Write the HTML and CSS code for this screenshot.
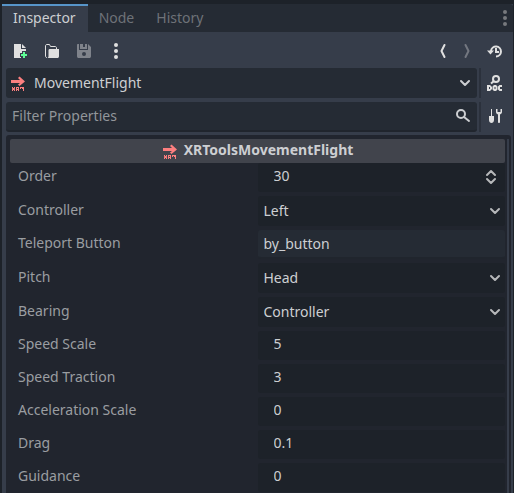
FILE: index.html
```html
<!DOCTYPE html>
<html lang="en">
<head>
<meta charset="utf-8">
<title>Inspector</title>
<link rel="stylesheet" href="styles.css">
</head>
<body>
<svg class="defs" aria-hidden="true">
  <symbol id="xr" viewBox="0 0 16 16">
    <path d="M1 5h9L8 3l1.500-1.500L15 6.500l-5.500 4.500L8 9.500 10 8H1z" fill="#fc7f7f"/>
    <path d="M2 12h1v1h1v-1h1v1.500L4.500 14l.5.500V16H4v-1H3v1H2v-1.500l.5-.5-.5-.500zM6 12h3v4H8v-1H7v1H6zM7 13v1h1v-1zM10 12h4v4h-1v-2h-1v-1h-1v1h-1z" fill="#fc7f7f" fill-rule="evenodd"/>
  </symbol>
  <symbol id="chevron" viewBox="0 0 12 12">
    <path d="M2 4l4 4 4-4" fill="none" stroke="currentColor" stroke-width="2" stroke-linecap="round" stroke-linejoin="round"/>
  </symbol>
</svg>
<main class="dock">
  <nav class="tabs">
    <button class="tab active">Inspector</button>
    <button class="tab">Node</button>
    <button class="tab">History</button>
    <button class="icon-button dock-menu" aria-label="Dock menu">
      <svg width="16" height="16" viewBox="0 0 16 16" fill="#77797d"><circle cx="8" cy="2" r="2"/><circle cx="8" cy="8" r="2"/><circle cx="8" cy="14" r="2"/></svg>
    </button>
  </nav>
  <div class="toolbar">
    <button class="icon-button" aria-label="New resource">
      <svg width="16" height="16" viewBox="0 0 16 16"><path d="M2 1h7v5h5v2h-4v2H8v4h1v1H2zM10 1l4 4h-4z" fill="#e0e0e0"/><path d="M11 9h2v2h2v2h-2v2h-2v-2H9v-2h2z" fill="#5fff97"/></svg>
    </button>
    <button class="icon-button" aria-label="Open resource">
      <svg width="16" height="16" viewBox="0 0 16 16"><path d="M3 14.500c-1 0-1.500-.5-1.500-1.500V3c0-1 .5-1.500 1.500-1.500h2.500l1 2H11c1 0 1.500.5 1.500 1.500v1" fill="none" stroke="#e0e0e0"/><path d="M6 6h9v7c0 1.500-.5 2-2 2H3c1 0 1.500-.5 1.500-2V7.500C4.500 6.500 5 6 6 6z" fill="#e0e0e0"/></svg>
    </button>
    <button class="icon-button" aria-label="Save resource" disabled>
      <svg width="16" height="16" viewBox="0 0 16 16"><path fill-rule="evenodd" d="M2 1h1v5c0 1 0 1 1 1h7c1 0 1 0 1-1V1l3 3v9c0 1.500-.5 2-2 2H3c-1.500 0-2-.5-2-2V2c0-.6.400-1 1-1zM8 9a2 2 0 1 0 0 4 2 2 0 0 0 0-4z" fill="#7f838b"/><path d="M4 1h3v3h2V1h2v5H4z" fill="#7f838b"/></svg>
    </button>
    <button class="icon-button" aria-label="Resource menu">
      <svg width="16" height="16" viewBox="0 0 16 16" fill="#e0e0e0"><circle cx="8" cy="2" r="2"/><circle cx="8" cy="8" r="2"/><circle cx="8" cy="14" r="2"/></svg>
    </button>
    <span class="spacer"></span>
    <button class="icon-button back" aria-label="Previous object">
      <svg width="8" height="16" viewBox="0 0 8 16"><path d="M5.500 2l-3 6 3 6" fill="none" stroke="#e0e0e0" stroke-width="2" stroke-linecap="round" stroke-linejoin="round"/></svg>
    </button>
    <button class="icon-button forward" aria-label="Next object" disabled>
      <svg width="8" height="16" viewBox="0 0 8 16"><path d="M2.500 2l3 6-3 6" fill="none" stroke="#737780" stroke-width="2" stroke-linecap="round" stroke-linejoin="round"/></svg>
    </button>
    <button class="icon-button" aria-label="Object history">
      <svg width="16" height="16" viewBox="0 0 16 16"><path d="M4 8a5 5 0 1 1 5 5.500" fill="none" stroke="#e0e0e0" stroke-width="2"/><path d="M0 7.500h7L3.500 11.500z" fill="#e0e0e0"/><path d="M9 5v4h3" fill="none" stroke="#e0e0e0" stroke-width="2"/></svg>
    </button>
  </div>
  <div class="bar">
    <div class="box object">
      <svg class="lead" width="16" height="16"><use href="#xr"/></svg>
      <select aria-label="Edited object"><option>MovementFlight</option></select>
      <svg class="arrow" width="12" height="12"><use href="#chevron"/></svg>
    </div>
    <button class="icon-button side" aria-label="Open documentation">
      <svg width="16" height="16" viewBox="0 0 16 16"><path d="M7 6L4 8.500" stroke="#e0e0e0" stroke-width="2"/><circle cx="9" cy="4" r="3" fill="none" stroke="#e0e0e0" stroke-width="2"/><path fill-rule="evenodd" fill="#e0e0e0" d="M0 10h3l2 2v2l-2 2H0zM2 12v2h1v-2zM7 10h2l1.500 1.500v3L9 16H7l-1.500-1.500v-3zM7.500 12v2h1v-2zM12.500 10H15v2h-2v2h2v2h-2.500L11 14.500v-3z"/></svg>
    </button>
  </div>
  <div class="bar">
    <div class="box filter">
      <input type="text" placeholder="Filter Properties" aria-label="Filter Properties">
      <svg class="arrow" width="16" height="16" viewBox="0 0 16 16" fill="none" stroke="#cdcfd2" stroke-width="2"><circle cx="6" cy="6" r="4"/><path d="M9 9l5 4" stroke-linecap="round"/></svg>
    </div>
    <button class="icon-button side" aria-label="Manage properties">
      <svg width="16" height="16" viewBox="0 0 16 16"><path d="M4 1h1v7h2v4c0 4-5 4-5 0V8h2z" fill="#e0e0e0"/><path d="M9 1v3c0 1.300.700 2 2 2.500V14c0 1.300 2 1.300 2 0V6.500c1.300-.5 2-1.200 2-2.500V1h-1.500v3h-3V1z" fill="#e0e0e0"/></svg>
    </button>
  </div>
  <section class="properties">
    <h1 class="category"><svg width="16" height="16"><use href="#xr"/></svg><span>XRToolsMovementFlight</span></h1>
    <div class="row">
      <label for="order">Order</label>
      <div class="field number"><input id="order" type="text" value="30">
        <svg class="arrow" width="16" height="16" viewBox="0 0 16 16" fill="none" stroke="#b6b8ba" stroke-width="2" stroke-linecap="round" stroke-linejoin="round"><path d="M4 6l4-4 4 4M4 10l4 4 4-4"/></svg>
      </div>
    </div>
    <div class="row choice">
      <label for="controller">Controller</label>
      <div class="field"><select id="controller"><option>Left</option><option>Right</option></select><svg class="arrow" width="12" height="12"><use href="#chevron"/></svg></div>
    </div>
    <div class="row">
      <label for="teleport">Teleport Button</label>
      <div class="field string"><input id="teleport" type="text" value="by_button"></div>
    </div>
    <div class="row choice">
      <label for="pitch">Pitch</label>
      <div class="field"><select id="pitch"><option>Head</option><option>Controller</option></select><svg class="arrow" width="12" height="12"><use href="#chevron"/></svg></div>
    </div>
    <div class="row choice">
      <label for="bearing">Bearing</label>
      <div class="field"><select id="bearing"><option>Controller</option><option>Head</option></select><svg class="arrow" width="12" height="12"><use href="#chevron"/></svg></div>
    </div>
    <div class="row">
      <label for="scale">Speed Scale</label>
      <div class="field number"><input id="scale" type="text" value="5"></div>
    </div>
    <div class="row">
      <label for="traction">Speed Traction</label>
      <div class="field number"><input id="traction" type="text" value="3"></div>
    </div>
    <div class="row">
      <label for="acceleration">Acceleration Scale</label>
      <div class="field number"><input id="acceleration" type="text" value="0"></div>
    </div>
    <div class="row">
      <label for="drag">Drag</label>
      <div class="field number"><input id="drag" type="text" value="0.1"></div>
    </div>
    <div class="row">
      <label for="guidance">Guidance</label>
      <div class="field number"><input id="guidance" type="text" value="0"></div>
    </div>
  </section>
</main>
</body>
</html>
```
FILE: styles.css
```css
* {
  box-sizing: border-box;
}

body {
  margin: 0;
  padding: 4px 1px 0 2px;
  background: #1d2229;
  color: #cdcfd2;
  font: 14px/20px "Noto Sans", sans-serif;
}

button,
input,
select {
  margin: 0;
  padding: 0;
  border: 0;
  outline: 0;
  background: none;
  color: inherit;
  font: inherit;
  appearance: none;
}

svg {
  display: block;
  flex: none;
}

.defs {
  position: absolute;
  width: 0;
  height: 0;
}

.dock {
  display: flex;
  flex-direction: column;
  min-height: calc(100vh - 4px);
  background: #363d4a;
}

.tabs {
  display: flex;
  height: 28px;
  background: #252b34;
  border-radius: 3px 3px 0 0;
}

.tab {
  padding: 0 11px;
  color: #6e7278;
}

.tab.active {
  padding: 0 12px 2px 11px;
  border-top: 2px solid #5795c9;
  background: #363d4a;
  color: #cdcfd2;
}

.icon-button {
  display: flex;
  align-items: center;
  justify-content: center;
}

.dock-menu {
  width: 16px;
  margin-left: auto;
}

.toolbar {
  display: flex;
  align-items: center;
  gap: 16px;
  height: 36px;
  padding: 2px 10px 0;
}

.spacer {
  flex: 1;
}

.bar {
  display: flex;
  margin-bottom: 4px;
  padding: 0 10px 0 4px;
}

.box {
  display: flex;
  align-items: center;
  flex: 1;
  height: 30px;
  padding: 0 6px 0 4px;
  border-radius: 3px;
  background: #252b34;
}

.box select,
.box input,
.field select,
.field input {
  flex: 1;
  min-width: 0;
  height: 100%;
}

.object select {
  padding-left: 8px;
}

.filter {
  padding-left: 6px;
  border-bottom: 2px solid #20252d;
}

.filter input {
  padding-bottom: 2px;
}

.filter input::placeholder {
  color: #92969a;
  opacity: 1;
}

.side {
  width: 24px;
  padding-left: 6px;
  margin-left: 2px;
  border-left: 2px solid #2b313c;
}

.filter + .side {
  padding-bottom: 2px;
}

.properties {
  display: flex;
  flex-direction: column;
  flex: 1;
  gap: 4px;
  margin: -1px 2px 0 4px;
  padding: 4px 6px 0 4px;
  border-radius: 3px 3px 0 0;
  background: linear-gradient(#363d4a, #363d4a) right 2px top 4px / 2px 100% no-repeat #21252e;
}

.category {
  display: flex;
  align-items: center;
  justify-content: center;
  gap: 6px;
  height: 24px;
  margin: 0 0 -4px;
  border-radius: 2px;
  background: #41444c;
  font-size: 14px;
  font-weight: 700;
}

.category span {
  padding-bottom: 2px;
}

.row {
  display: grid;
  grid-template-columns: 1fr 1fr;
  height: 29px;
}

.choice {
  height: 30px;
}

.row label {
  padding: 3px 8px;
  color: #9a9da1;
}

.choice label {
  padding-top: 4px;
}

.field {
  display: flex;
  align-items: center;
  padding: 0 4px 0 6px;
  border-radius: 3px;
  background: #1d2229;
}

.number {
  padding: 0 6px 1px 16px;
}

.number input {
  padding-bottom: 4px;
}

.string {
  background: #252b34;
  border-bottom: 2px solid #20252d;
}

.field .arrow {
  color: #b6b8ba;
}
```
